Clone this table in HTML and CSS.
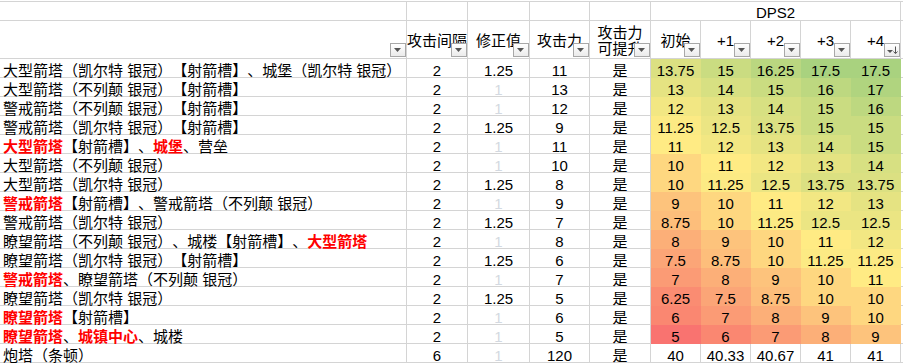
FILE: index.html
```html
<!DOCTYPE html>
<html lang="zh-CN">
<head>
<meta charset="utf-8">
<title>DPS2</title>
<link rel="stylesheet" href="styles.css">
</head>
<body>
<div class="sheet">
  <div class="cell"></div><div class="cell"></div><div class="cell"></div><div class="cell"></div><div class="cell"></div>
  <div class="cell merged">DPS2</div>
  <div class="cell tail"></div>

  <div class="cell hdr"><span class="fb"></span></div>
  <div class="cell hdr"><span class="ht">攻击间隔</span><span class="fb"></span></div>
  <div class="cell hdr"><span class="ht">修正值</span><span class="fb"></span></div>
  <div class="cell hdr"><span class="ht">攻击力</span><span class="fb"></span></div>
  <div class="cell hdr"><span class="ht two">攻击力<br>可提升</span><span class="fb"></span></div>
  <div class="cell hdr"><span class="ht">初始</span><span class="fb"></span></div>
  <div class="cell hdr"><span class="ht">+1</span><span class="fb"></span></div>
  <div class="cell hdr"><span class="ht">+2</span><span class="fb"></span></div>
  <div class="cell hdr"><span class="ht">+3</span><span class="fb"></span></div>
  <div class="cell hdr"><span class="ht">+4</span><span class="fb sorted"><svg width="14" height="12" viewBox="0 0 14 12"><path d="M2 6h6l-3 3z" fill="#555"/><path d="M10.5 2.5v6.5" stroke="#555" stroke-width="1"/><path d="M8.5 7.5l2 2.2 2-2.2" fill="none" stroke="#555" stroke-width="1"/></svg></span></div>
  <div class="cell tail"></div>

  <div class="cell name">大型箭塔（凯尔特 银冠）【射箭槽】、城堡（凯尔特 银冠）</div>
  <div class="cell">2</div><div class="cell">1.25</div><div class="cell">11</div><div class="cell">是</div>
  <div class="cell hot" style="--bg:#DBE082">13.75</div><div class="cell hot" style="--bg:#CADC81">15</div><div class="cell hot" style="--bg:#BAD780">16.25</div><div class="cell hot" style="--bg:#A9D27F">17.5</div><div class="cell hot" style="--bg:#A9D27F">17.5</div>
  <div class="cell tail"></div>

  <div class="cell name">大型箭塔（不列颠 银冠）【射箭槽】</div>
  <div class="cell">2</div><div class="cell faint">1</div><div class="cell">13</div><div class="cell">是</div>
  <div class="cell hot" style="--bg:#E5E382">13</div><div class="cell hot" style="--bg:#D7E082">14</div><div class="cell hot" style="--bg:#CADC81">15</div><div class="cell hot" style="--bg:#BDD880">16</div><div class="cell hot" style="--bg:#B0D47F">17</div>
  <div class="cell tail"></div>

  <div class="cell name">警戒箭塔（不列颠 银冠）【射箭槽】</div>
  <div class="cell">2</div><div class="cell faint">1</div><div class="cell">12</div><div class="cell">是</div>
  <div class="cell hot" style="--bg:#F2E783">12</div><div class="cell hot" style="--bg:#E5E382">13</div><div class="cell hot" style="--bg:#D7E082">14</div><div class="cell hot" style="--bg:#CADC81">15</div><div class="cell hot" style="--bg:#BDD880">16</div>
  <div class="cell tail"></div>

  <div class="cell name">警戒箭塔（凯尔特 银冠）【射箭槽】</div>
  <div class="cell">2</div><div class="cell">1.25</div><div class="cell">9</div><div class="cell">是</div>
  <div class="cell hot" style="--bg:#FCEA84">11.25</div><div class="cell hot" style="--bg:#EBE583">12.5</div><div class="cell hot" style="--bg:#DBE082">13.75</div><div class="cell hot" style="--bg:#CADC81">15</div><div class="cell hot" style="--bg:#CADC81">15</div>
  <div class="cell tail"></div>

  <div class="cell name"><span class="hl">大型箭塔</span>【射箭槽】、<span class="hl">城堡</span>、营垒</div>
  <div class="cell">2</div><div class="cell faint">1</div><div class="cell">11</div><div class="cell">是</div>
  <div class="cell hot" style="--bg:#FFEB84">11</div><div class="cell hot" style="--bg:#F2E783">12</div><div class="cell hot" style="--bg:#E5E382">13</div><div class="cell hot" style="--bg:#D7E082">14</div><div class="cell hot" style="--bg:#CADC81">15</div>
  <div class="cell tail"></div>

  <div class="cell name">大型箭塔（不列颠 银冠）</div>
  <div class="cell">2</div><div class="cell faint">1</div><div class="cell">10</div><div class="cell">是</div>
  <div class="cell hot" style="--bg:#FED780">10</div><div class="cell hot" style="--bg:#FFEB84">11</div><div class="cell hot" style="--bg:#F2E783">12</div><div class="cell hot" style="--bg:#E5E382">13</div><div class="cell hot" style="--bg:#D7E082">14</div>
  <div class="cell tail"></div>

  <div class="cell name">大型箭塔（凯尔特 银冠）</div>
  <div class="cell">2</div><div class="cell">1.25</div><div class="cell">8</div><div class="cell">是</div>
  <div class="cell hot" style="--bg:#FED780">10</div><div class="cell hot" style="--bg:#FCEA84">11.25</div><div class="cell hot" style="--bg:#EBE583">12.5</div><div class="cell hot" style="--bg:#DBE082">13.75</div><div class="cell hot" style="--bg:#DBE082">13.75</div>
  <div class="cell tail"></div>

  <div class="cell name"><span class="hl">警戒箭塔</span>【射箭槽】、警戒箭塔（不列颠 银冠）</div>
  <div class="cell">2</div><div class="cell faint">1</div><div class="cell">9</div><div class="cell">是</div>
  <div class="cell hot" style="--bg:#FDC37C">9</div><div class="cell hot" style="--bg:#FED780">10</div><div class="cell hot" style="--bg:#FFEB84">11</div><div class="cell hot" style="--bg:#F2E783">12</div><div class="cell hot" style="--bg:#E5E382">13</div>
  <div class="cell tail"></div>

  <div class="cell name">警戒箭塔（凯尔特 银冠）</div>
  <div class="cell">2</div><div class="cell">1.25</div><div class="cell">7</div><div class="cell">是</div>
  <div class="cell hot" style="--bg:#FDBE7B">8.75</div><div class="cell hot" style="--bg:#FED780">10</div><div class="cell hot" style="--bg:#FCEA84">11.25</div><div class="cell hot" style="--bg:#EBE583">12.5</div><div class="cell hot" style="--bg:#EBE583">12.5</div>
  <div class="cell tail"></div>

  <div class="cell name">瞭望箭塔（不列颠 银冠）、城楼【射箭槽】、<span class="hl">大型箭塔</span></div>
  <div class="cell">2</div><div class="cell faint">1</div><div class="cell">8</div><div class="cell">是</div>
  <div class="cell hot" style="--bg:#FCAF78">8</div><div class="cell hot" style="--bg:#FDC37C">9</div><div class="cell hot" style="--bg:#FED780">10</div><div class="cell hot" style="--bg:#FFEB84">11</div><div class="cell hot" style="--bg:#F2E783">12</div>
  <div class="cell tail"></div>

  <div class="cell name">瞭望箭塔（凯尔特 银冠）【射箭槽】</div>
  <div class="cell">2</div><div class="cell">1.25</div><div class="cell">6</div><div class="cell">是</div>
  <div class="cell hot" style="--bg:#FBA577">7.5</div><div class="cell hot" style="--bg:#FDBE7B">8.75</div><div class="cell hot" style="--bg:#FED780">10</div><div class="cell hot" style="--bg:#FCEA84">11.25</div><div class="cell hot" style="--bg:#FCEA84">11.25</div>
  <div class="cell tail"></div>

  <div class="cell name"><span class="hl">警戒箭塔</span>、瞭望箭塔（不列颠 银冠）</div>
  <div class="cell">2</div><div class="cell faint">1</div><div class="cell">7</div><div class="cell">是</div>
  <div class="cell hot" style="--bg:#FB9B75">7</div><div class="cell hot" style="--bg:#FCAF78">8</div><div class="cell hot" style="--bg:#FDC37C">9</div><div class="cell hot" style="--bg:#FED780">10</div><div class="cell hot" style="--bg:#FFEB84">11</div>
  <div class="cell tail"></div>

  <div class="cell name">瞭望箭塔（凯尔特 银冠）</div>
  <div class="cell">2</div><div class="cell">1.25</div><div class="cell">5</div><div class="cell">是</div>
  <div class="cell hot" style="--bg:#FA8C72">6.25</div><div class="cell hot" style="--bg:#FBA577">7.5</div><div class="cell hot" style="--bg:#FDBE7B">8.75</div><div class="cell hot" style="--bg:#FED780">10</div><div class="cell hot" style="--bg:#FED780">10</div>
  <div class="cell tail"></div>

  <div class="cell name"><span class="hl">瞭望箭塔</span>【射箭槽】</div>
  <div class="cell">2</div><div class="cell faint">1</div><div class="cell">6</div><div class="cell">是</div>
  <div class="cell hot" style="--bg:#FA8771">6</div><div class="cell hot" style="--bg:#FB9B75">7</div><div class="cell hot" style="--bg:#FCAF78">8</div><div class="cell hot" style="--bg:#FDC37C">9</div><div class="cell hot" style="--bg:#FED780">10</div>
  <div class="cell tail"></div>

  <div class="cell name"><span class="hl">瞭望箭塔</span>、<span class="hl">城镇中心</span>、城楼</div>
  <div class="cell">2</div><div class="cell faint">1</div><div class="cell">5</div><div class="cell">是</div>
  <div class="cell hot" style="--bg:#F97370">5</div><div class="cell hot" style="--bg:#FA8771">6</div><div class="cell hot" style="--bg:#FB9B75">7</div><div class="cell hot" style="--bg:#FCAF78">8</div><div class="cell hot" style="--bg:#FDC37C">9</div>
  <div class="cell tail"></div>

  <div class="cell name">炮塔（条顿）</div>
  <div class="cell">6</div><div class="cell faint">1</div><div class="cell">120</div><div class="cell">是</div>
  <div class="cell">40</div><div class="cell">40.33</div><div class="cell">40.67</div><div class="cell">41</div><div class="cell">41</div>
  <div class="cell tail"></div>
</div>
</body>
</html>
```
FILE: styles.css
```css
html, body {
  margin: 0;
  padding: 0;
  background: #ffffff;
}

body {
  overflow: hidden;
  font-family: "Liberation Sans", "Noto Sans CJK SC", sans-serif;
  font-size: 15px;
  color: #000000;
  text-spacing-trim: space-all;
}

.sheet {
  display: grid;
  grid-template-columns: 407px 61px 62px 60px 61px repeat(5, 50px) 2px;
  grid-template-rows: 19px 38px repeat(16, 19px);
  margin-top: 1px;
  border-top: 1px solid #d4d4d4;
  width: max-content;
}

.cell {
  position: relative;
  box-sizing: border-box;
  border-right: 1px solid #d4d4d4;
  border-bottom: 1px solid #d4d4d4;
  display: flex;
  align-items: flex-end;
  justify-content: center;
  line-height: 12px;
  white-space: nowrap;
}

.tail {
  border-right: none;
}

.merged {
  grid-column: span 5;
  padding-bottom: 1px;
}

.name {
  justify-content: flex-start;
  padding-left: 3px;
}

.hdr {
  align-items: center;
  line-height: 16px;
  padding-top: 2px;
}

.ht {
  display: block;
  text-align: center;
}

.hot {
  background: var(--bg);
  border-right-color: var(--bg);
  border-bottom-color: var(--bg);
}

.faint {
  color: #d3d9e1;
}

.hl {
  color: #ff0000;
  font-weight: bold;
}

.fb {
  position: absolute;
  right: 0;
  bottom: 1px;
  width: 16px;
  height: 14px;
  box-sizing: border-box;
  border: 1px solid #a8a8a8;
  background: linear-gradient(#ffffff, #ebebeb);
}

.fb::after {
  content: "";
  position: absolute;
  left: 3px;
  top: 4px;
  width: 7px;
  height: 4px;
  background: #555555;
  clip-path: polygon(0 0, 100% 0, 50% 100%);
}

.fb.sorted::after {
  display: none;
}

.fb svg {
  display: block;
}
```
